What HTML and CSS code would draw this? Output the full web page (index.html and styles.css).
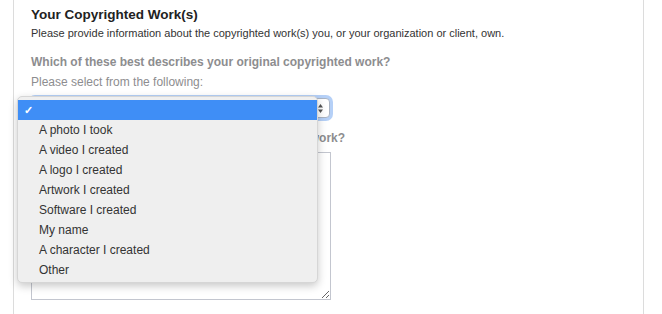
FILE: index.html
```html
<!DOCTYPE html>
<html lang="en">
<head>
  <meta charset="UTF-8" />
  <title>Your Copyrighted Work(s)</title>
  <link rel="stylesheet" href="styles.css">
</head>
<body>
  <div class="card">
    <h2>Your Copyrighted Work(s)</h2>
    <p class="intro">Please provide information about the copyrighted work(s) you, or your organization or client, own.</p>

    <div class="question">Which of these best describes your original copyrighted work?</div>
    <div class="hint">Please select from the following:</div>

    <div class="select-wrap">
      <div class="select">
        <svg class="stepper" width="7" height="11" viewBox="0 0 7 11">
          <path d="M3.5 1 L6 4.5 L1 4.5 Z" fill="#555"/>
          <path d="M3.5 10 L6 6.5 L1 6.5 Z" fill="#555"/>
        </svg>
      </div>

      <ul class="menu">
        <li class="selected"><span class="check">✓</span></li>
        <li>A photo I took</li>
        <li>A video I created</li>
        <li>A logo I created</li>
        <li>Artwork I created</li>
        <li>Software I created</li>
        <li>My name</li>
        <li>A character I created</li>
        <li>Other</li>
      </ul>
    </div>

    <div class="question second">Can you also describe your original copyrighted work?</div>
    <textarea class="details"></textarea>
  </div>
</body>
</html>
```

FILE: styles.css
```css
body {
  margin: 0;
  background: #fff;
  font-family: "Liberation Sans", Arial, Helvetica, sans-serif;
  color: #333;
}

.card {
  margin-left: 13px;
  width: 612px;
  height: 314px;
  padding: 7px 0 0 17px;
  border-left: 1px solid #dcdcdc;
  border-right: 1px solid #dcdcdc;
  box-sizing: content-box;
}

h2 {
  margin: 0;
  font-size: 13.5px;
  line-height: 16px;
  color: #222;
}

.intro {
  margin: 3px 0 0;
  font-size: 11px;
  line-height: 14px;
  color: #333;
}

.question {
  margin-top: 14px;
  font-size: 12px;
  line-height: 16px;
  font-weight: bold;
  color: #8d8d8f;
}

.question.second {
  margin-top: 12px;
}

.hint {
  margin-top: 4px;
  font-size: 12px;
  line-height: 16px;
  color: #8d8d8f;
}

.select-wrap {
  position: relative;
  margin-top: 8px;
  width: 299px;
}

.select {
  height: 20px;
  border: 1px solid #aab4c4;
  border-radius: 4px;
  background: #fff;
  box-sizing: border-box;
  box-shadow: 0 0 0 3px rgba(120, 170, 240, 0.55);
  display: flex;
  align-items: center;
  justify-content: flex-end;
  padding-right: 5px;
}

.menu {
  position: absolute;
  left: -14px;
  top: -2px;
  width: 301px;
  margin: 0;
  padding: 3px 0 2px;
  list-style: none;
  background: #efefef;
  border: 1px solid #d6d6d6;
  border-radius: 5px;
  box-sizing: border-box;
  box-shadow: 0 3px 8px rgba(0, 0, 0, 0.22);
  z-index: 2;
}

.menu li {
  height: 20px;
  line-height: 20px;
  padding-left: 21px;
  font-size: 12px;
  color: #333;
}

.menu li.selected {
  background: #3f8ef6;
  color: #fff;
  position: relative;
}

.check {
  position: absolute;
  left: 6px;
  font-size: 11px;
  font-weight: bold;
}

.details {
  display: block;
  margin-top: 6px;
  width: 300px;
  height: 148px;
  border: 1px solid #c3c6cf;
  border-radius: 0;
  box-sizing: border-box;
  background: #fff;
  resize: both;
}
```
